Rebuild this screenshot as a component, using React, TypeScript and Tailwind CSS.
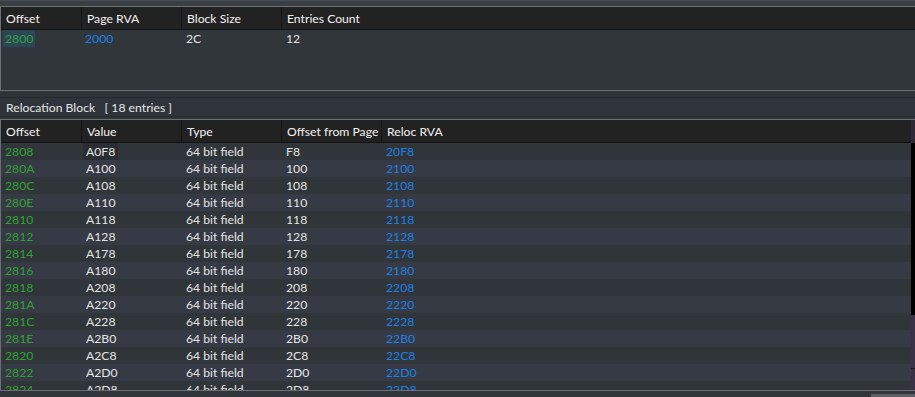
import React from "react";

const rows: [string, string, string, string][] = [
  ["2808", "A0F8", "F8", "20F8"],
  ["280A", "A100", "100", "2100"],
  ["280C", "A108", "108", "2108"],
  ["280E", "A110", "110", "2110"],
  ["2810", "A118", "118", "2118"],
  ["2812", "A128", "128", "2128"],
  ["2814", "A178", "178", "2178"],
  ["2816", "A180", "180", "2180"],
  ["2818", "A208", "208", "2208"],
  ["281A", "A220", "220", "2220"],
  ["281C", "A228", "228", "2228"],
  ["281E", "A2B0", "2B0", "22B0"],
  ["2820", "A2C8", "2C8", "22C8"],
  ["2822", "A2D0", "2D0", "22D0"],
  ["2824", "A2D8", "2D8", "22D8"],
];

function HeaderCell({ w, children, last }: { w: string; children?: React.ReactNode; last?: boolean }) {
  return (
    <div
      className={`${w} shrink-0 h-full flex items-center pl-[5px] pt-[2px] whitespace-nowrap overflow-hidden ${last ? "" : "border-r border-[#161616]"}`}
    >
      {children}
    </div>
  );
}

export default function App() {
  return (
    <div
      className="w-[915px] h-[397px] overflow-hidden bg-[#31363b] flex flex-col text-[12.2px] text-[#e4e4e4]"
      style={{ fontFamily: 'Lato, "Noto Sans", sans-serif' }}
    >
      {/* top band */}
      <div className="h-[6px] shrink-0 bg-[#3a3f45] border-t border-[#474c52]" />

      {/* Table 1 */}
      <div className="shrink-0 h-[85px] border-t border-l border-b border-[#6c7075] flex flex-col">
        <div className="h-[23px] shrink-0 bg-[#222222] border-b border-[#121212] flex text-[#f2f2f2]">
          <HeaderCell w="w-[81px]">Offset</HeaderCell>
          <HeaderCell w="w-[100px]">Page RVA</HeaderCell>
          <HeaderCell w="w-[100px]">Block Size</HeaderCell>
          <HeaderCell w="w-[100px]" last>Entries Count</HeaderCell>
          <div className="flex-1" />
        </div>
        <div className="flex-1 bg-[#31363b]">
          <div className="h-[17px] flex leading-[17px] whitespace-nowrap">
            <div className="w-[81px] shrink-0 pl-[2px]">
              <span className="inline-block bg-[#2b4757] px-[2px] text-[#33a036]">2800</span>
            </div>
            <div className="w-[100px] shrink-0 pl-[3px] text-[#1e80e6]">2000</div>
            <div className="w-[100px] shrink-0 pl-[4px]">2C</div>
            <div className="w-[100px] shrink-0 pl-[4px]">12</div>
          </div>
        </div>
      </div>

      {/* Group label */}
      <div className="h-[6px] shrink-0 bg-[#2f3439]" />
      <div className="h-[22px] shrink-0 bg-[#2f343a] border-t border-[#272b30] flex flex-col">
        <div className="h-[19px] flex items-center pl-[6px] pt-[3px] text-[#e6e6e6] border-b border-[#272b30] whitespace-pre">
          Relocation Block   [ 18 entries ]
        </div>
        <div className="flex-1" />
      </div>

      {/* Table 2 */}
      <div className="shrink-0 h-[272px] border-t border-l border-b border-[#6c7075] flex">
        <div className="flex-1 flex flex-col min-w-0">
          <div className="h-[23px] shrink-0 bg-[#222222] border-b border-[#121212] flex text-[#f2f2f2]">
            <HeaderCell w="w-[81px]">Offset</HeaderCell>
            <HeaderCell w="w-[100px]">Value</HeaderCell>
            <HeaderCell w="w-[100px]">Type</HeaderCell>
            <HeaderCell w="w-[100px]">Offset from Page</HeaderCell>
            <HeaderCell w="flex-1" last>Reloc RVA</HeaderCell>
          </div>
          <div className="flex-1 overflow-hidden">
            {rows.map((r, i) => (
              <div
                key={r[0]}
                className={`h-[17px] flex leading-[17px] whitespace-nowrap ${i % 2 === 1 ? "bg-[#363a44]" : "bg-[#30353a]"}`}
              >
                <div className="w-[81px] shrink-0 pl-[4px] text-[#33a036]">{r[0]}</div>
                <div className="w-[100px] shrink-0 pl-[1px]">
                  <span className={`inline-block px-[3px] ${i === 0 ? "bg-[#2a2d31]" : ""}`}>{r[1]}</span>
                </div>
                <div className="w-[100px] shrink-0 pl-[4px]">64 bit field</div>
                <div className="w-[100px] shrink-0 pl-[4px]">{r[2]}</div>
                <div className="flex-1 pl-[4px] text-[#1e80e6]">{r[3]}</div>
              </div>
            ))}
          </div>
        </div>
        {/* vertical scrollbar */}
        <div className="w-[4px] shrink-0 flex flex-col bg-black">
          <div className="h-[23px] bg-[#2e2837]" />
          <div className="h-[172px]" />
          <div className="h-[54px] bg-[#3a3147] border-b border-[#1a1a1a]" />
          <div className="flex-1 bg-[#3a3147]" />
        </div>
      </div>

      {/* bottom */}
      <div className="flex-1 flex items-end">
        <div className="flex-1" />
        <div className="w-[44px] h-[3px] bg-[#5c6064]" />
      </div>
    </div>
  );
}
